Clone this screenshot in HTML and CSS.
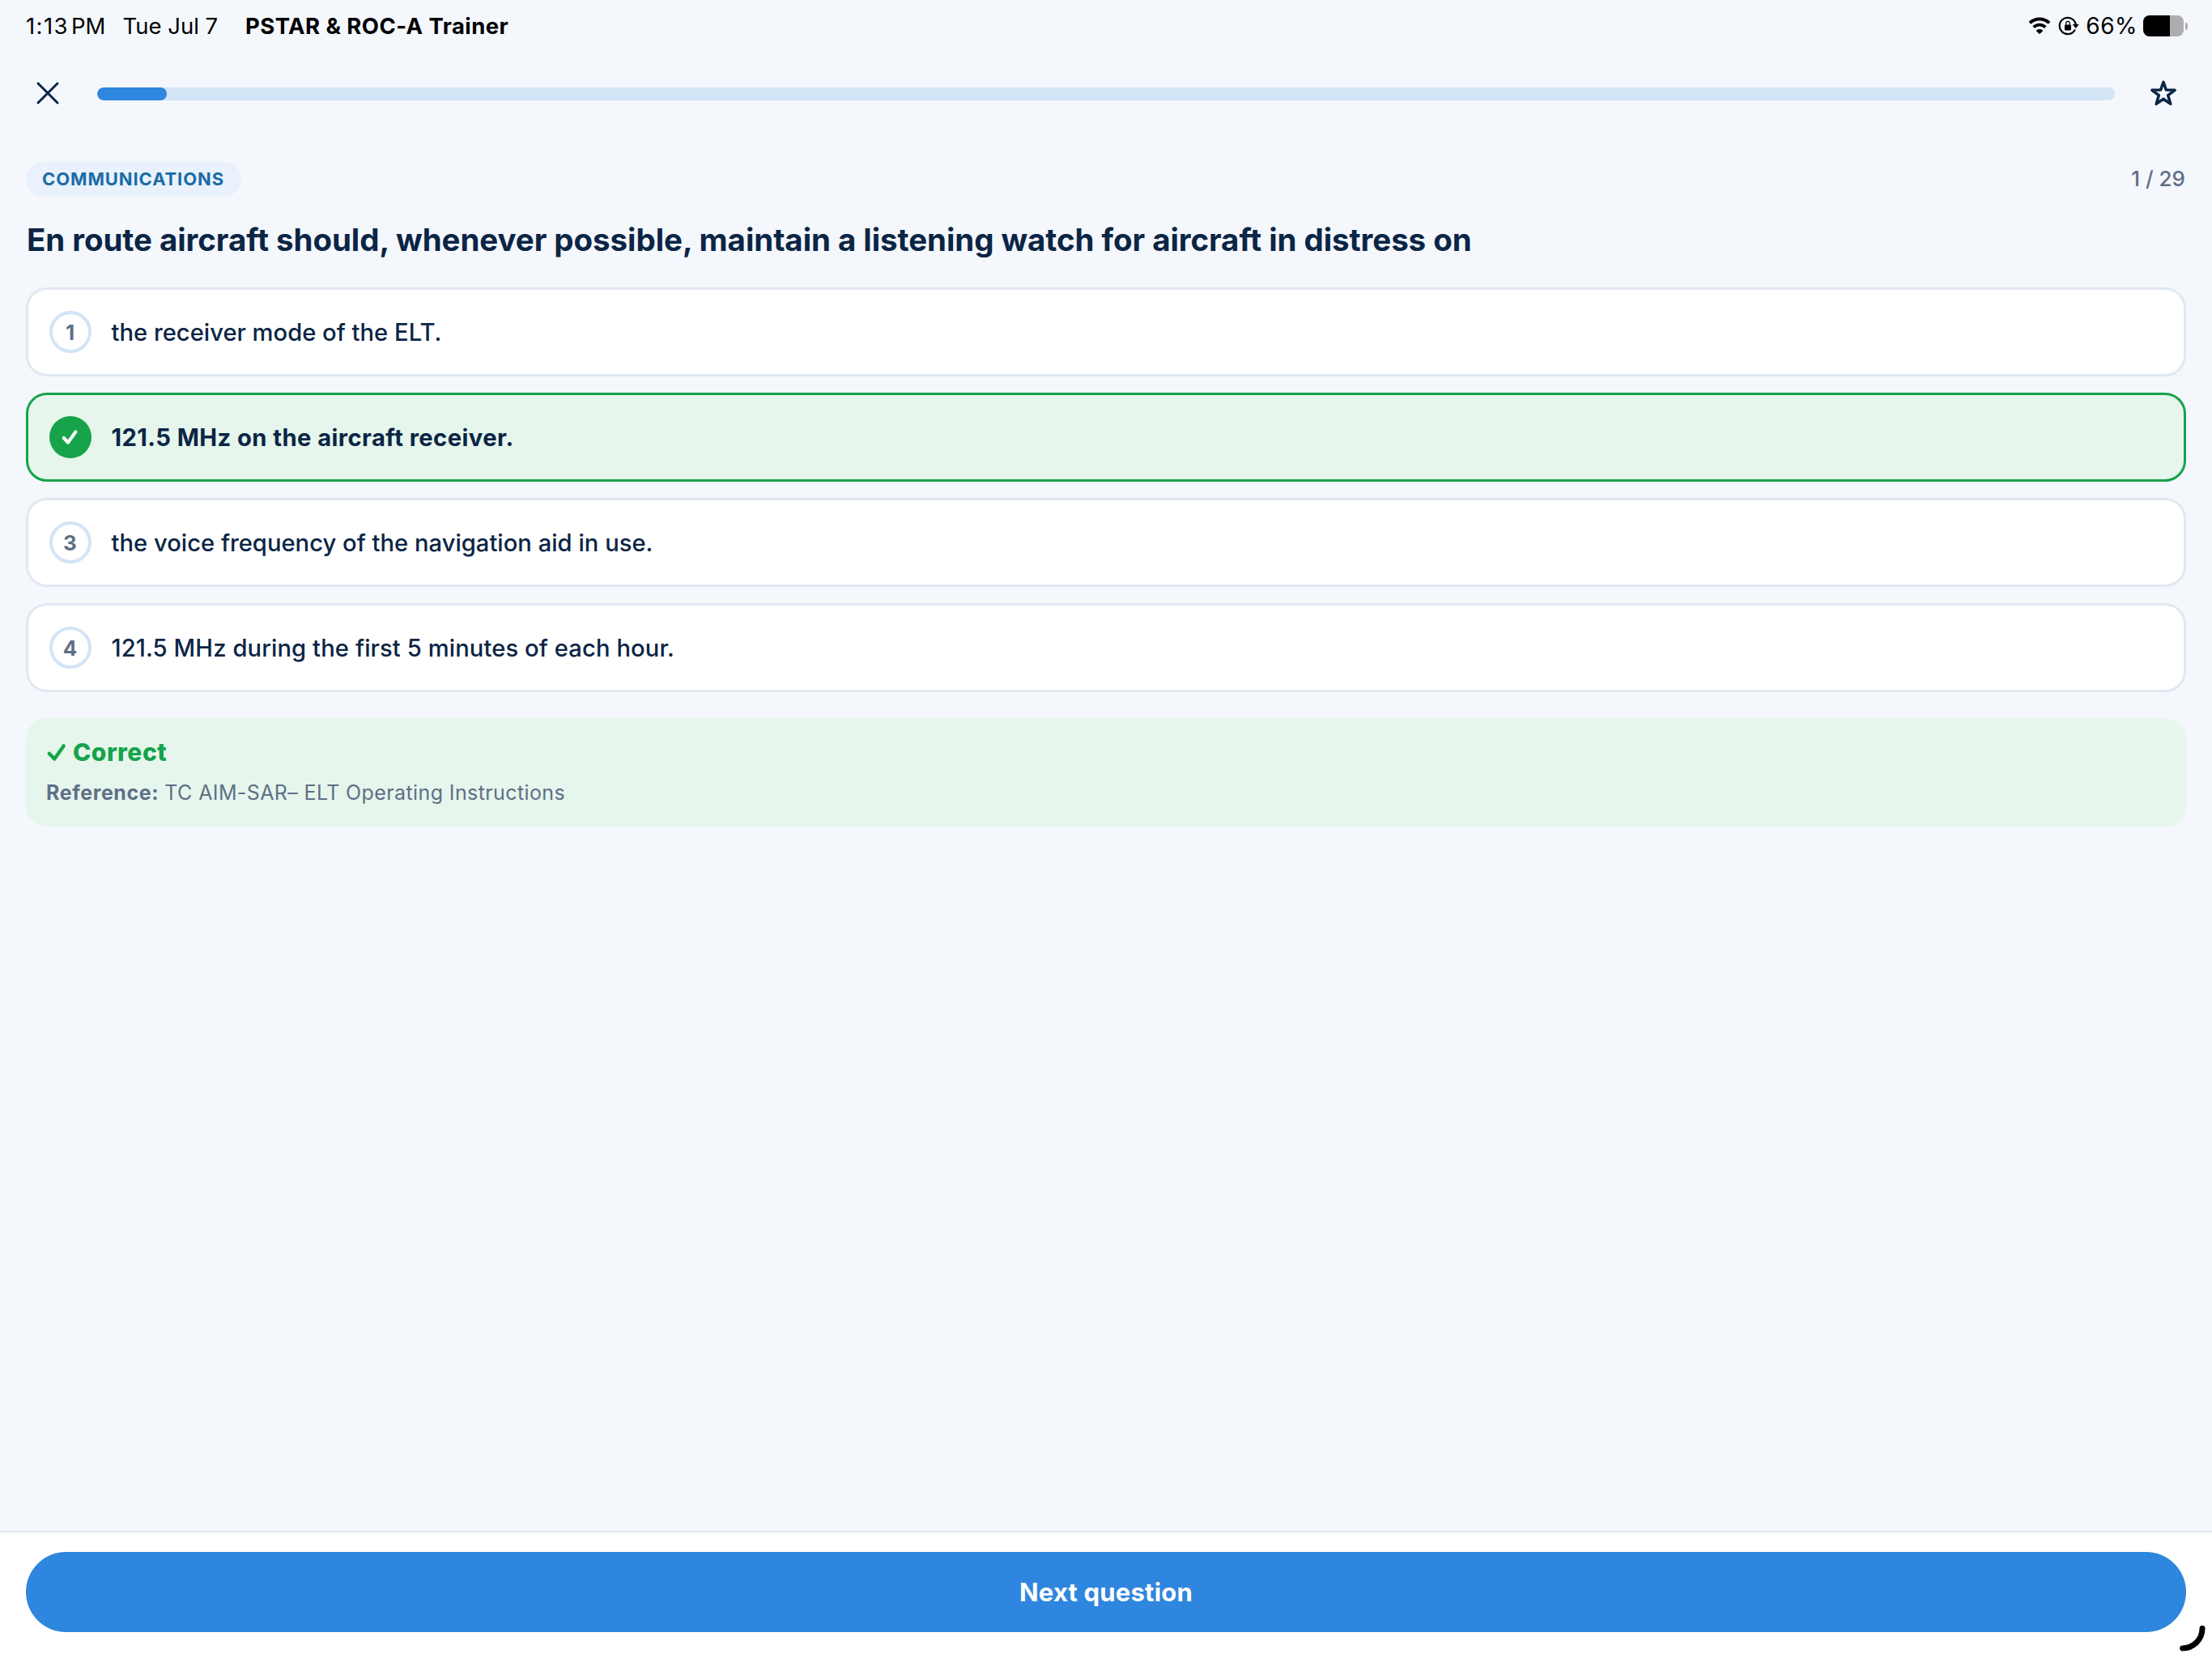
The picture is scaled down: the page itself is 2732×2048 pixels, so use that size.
FILE: index.html
```html
<!DOCTYPE html>
<html lang="en">
<head>
  <meta charset="UTF-8" />
  <title>PSTAR &amp; ROC-A Trainer</title>
  <meta name="viewport" content="width=device-width, initial-scale=1.0" />
  <link rel="stylesheet" href="styles.css">
</head>
<body>
  <div class="status-bar">
    <div class="status-time"><span class="clock">1:13</span><span>PM</span></div>
    <div class="status-date">Tue Jul 7</div>
    <div class="status-app">PSTAR &amp; ROC-A Trainer</div>
    <div class="status-right">
      <svg class="wifi" width="28" height="22" viewBox="0 0 28 22">
        <path d="M2 7.4 A17 17 0 0 1 26 7.4" fill="none" stroke="#000" stroke-width="4" stroke-linecap="butt" />
        <path d="M6.8 12.6 A10.2 10.2 0 0 1 21.2 12.6" fill="none" stroke="#000" stroke-width="3.8" />
        <path d="M14 20.8 L9.9 16.9 A6 6 0 0 1 18.1 16.9 Z" fill="#000" stroke="#000" stroke-width="0.6" stroke-linejoin="round" />
      </svg>
      <svg class="rotation-lock" width="26" height="24" viewBox="0 0 26 24">
        <path d="M20.4 17.3 A10.1 10.1 0 1 1 21.6 9.4" fill="none" stroke="#000" stroke-width="2.2" stroke-linecap="round" />
        <path d="M18.3 10.3 H25.2 L21.8 14.6 Z" fill="#000" stroke="#000" stroke-width="0.8" stroke-linejoin="round" />
        <rect x="8" y="10.6" width="8" height="6.8" rx="1" fill="#000" />
        <path d="M9.6 11 V9 A2.4 2.6 0 0 1 14.4 9 V11" fill="none" stroke="#000" stroke-width="1.2" />
      </svg>
      <span class="battery-text">66%</span>
      <div class="battery"><div class="battery-level"></div></div>
      <div class="battery-cap"></div>
    </div>
  </div>

  <div class="top-bar">
    <svg class="close" width="32" height="32" viewBox="0 0 32 32">
      <path d="M4 4 L28 28 M28 4 L4 28" fill="none" stroke="#0b2545" stroke-width="3" stroke-linecap="round" />
    </svg>
    <div class="progress">
      <div class="progress-fill" style="width: 3.45%"></div>
    </div>
    <svg class="star" width="36" height="36" viewBox="0 0 36 36">
      <path d="M18 4.3 L21.4 14.1 L32.1 14.3 L23.7 20.7 L26.8 31.4 L18 25.3 L9.2 31.4 L12.3 20.7 L3.9 14.3 L14.6 14.1 Z" fill="none" stroke="#0b2545" stroke-width="3.5" stroke-linejoin="round" />
    </svg>
  </div>

  <main class="content">
    <div class="meta">
      <span class="badge">COMMUNICATIONS</span>
      <span class="counter">1 / 29</span>
    </div>

    <h1>En route aircraft should, whenever possible, maintain a listening watch for aircraft in distress on</h1>

    <div class="options">
      <div class="option">
        <div class="number">1</div>
        <div class="option-text">the receiver mode of the ELT.</div>
      </div>
      <div class="option correct">
        <div class="number">
          <svg width="52" height="52" viewBox="0 0 52 52">
            <path d="M17.8 27 L23 32.6 L32.4 19.4" fill="none" stroke="#fff" stroke-width="4.2" stroke-linecap="round" stroke-linejoin="round" />
          </svg>
        </div>
        <div class="option-text">121.5 MHz on the aircraft receiver.</div>
      </div>
      <div class="option">
        <div class="number">3</div>
        <div class="option-text">the voice frequency of the navigation aid in use.</div>
      </div>
      <div class="option">
        <div class="number">4</div>
        <div class="option-text last">121.5 MHz during the first 5 minutes of each hour.</div>
      </div>
    </div>

    <div class="feedback">
      <div class="feedback-title">
        <svg width="26" height="26" viewBox="0 0 26 26">
          <path d="M4.8 14.8 L11.2 21.6 L22.6 5.4" fill="none" stroke="#16a34a" stroke-width="4.4" stroke-linecap="round" stroke-linejoin="round" />
        </svg>
        <span>Correct</span>
      </div>
      <div class="feedback-ref"><b>Reference:</b><span>TC AIM-SAR– ELT Operating Instructions</span></div>
    </div>
  </main>

  <footer class="footer">
    <button class="next-button">Next question</button>
  </footer>

  <svg class="corner" width="40" height="40" viewBox="0 0 40 40">
    <path d="M32 7.5 A24.5 24.5 0 0 1 7.7 32" fill="none" stroke="#000" stroke-width="7" stroke-linecap="round" />
  </svg>
</body>
</html>
```
FILE: styles.css
```css
:root {
  --bg: #f4f7fc;
  --navy: #0b2545;
  --muted: #5f6f87;
  --blue: #2e86de;
  --track: #d3e4f7;
  --line: #e2e8f2;
  --green: #16a34a;
  --green-bg: #e6f6ec;
}

* {
  box-sizing: border-box;
}

body {
  margin: 0;
  height: 100vh;
  display: flex;
  flex-direction: column;
  background: var(--bg);
  font-family: Inter, "Liberation Sans", sans-serif;
  color: var(--navy);
  overflow: hidden;
  position: relative;
}

.status-bar {
  height: 64px;
  padding: 0 30px 0 32px;
  display: flex;
  align-items: center;
  color: #000;
  font-size: 27.5px;
  white-space: nowrap;
}

.status-time {
  width: 119.5px;
}

.clock {
  letter-spacing: 1.4px;
  margin-right: 3px;
}

.status-date {
  width: 151.5px;
}

.status-app {
  font-weight: 700;
  letter-spacing: 0.43px;
}

.status-right {
  margin-left: auto;
  display: flex;
  align-items: center;
}

.wifi {
  margin-right: 9px;
}

.rotation-lock {
  margin-right: 8px;
}

.battery-text {
  font-size: 28px;
  letter-spacing: 0.5px;
  margin-right: 7px;
}

.battery {
  width: 50px;
  height: 26px;
  border-radius: 8px;
  background: #adadb1;
  overflow: hidden;
}

.battery-level {
  width: 66%;
  height: 100%;
  background: #000;
}

.battery-cap {
  width: 3px;
  height: 9px;
  margin-left: 2px;
  border-radius: 0 3px 3px 0;
  background: #adadb1;
}

.top-bar {
  height: 104px;
  padding: 0 42px 0 43px;
  display: flex;
  align-items: center;
}

.close {
  margin: 0 45px 2px 0;
}

.progress {
  flex: 1;
  height: 16px;
  border-radius: 8px;
  background: var(--track);
  overflow: hidden;
}

.progress-fill {
  height: 100%;
  border-radius: 8px;
  background: var(--blue);
}

.star {
  margin: 0 0 2px 42px;
}

.content {
  flex: 1;
  padding: 32px 32px 0;
}

.meta {
  display: flex;
  justify-content: space-between;
  align-items: flex-start;
}

.badge {
  height: 43px;
  padding: 0 21px 0 20px;
  border-radius: 22px;
  background: #e9f2fc;
  color: #1b6ca8;
  font-size: 22px;
  font-weight: 700;
  line-height: 43px;
  letter-spacing: 0.9px;
}

.counter {
  padding-right: 1px;
  color: var(--muted);
  font-size: 26px;
  font-weight: 500;
  line-height: 42px;
}

h1 {
  margin: 27px 0 33px 1px;
  font-size: 38.5px;
  font-weight: 700;
  line-height: 52px;
  letter-spacing: -0.07px;
}

.options {
  display: flex;
  flex-direction: column;
  gap: 20px;
}

.option {
  height: 110px;
  padding: 0 26px;
  display: flex;
  align-items: center;
  gap: 24px;
  border: 3px solid var(--line);
  border-radius: 26px;
  background: #fff;
}

.number {
  width: 52px;
  height: 52px;
  padding-right: 1px;
  display: flex;
  align-items: center;
  justify-content: center;
  border: 4px solid var(--track);
  border-radius: 50%;
  color: var(--muted);
  font-size: 26px;
  font-weight: 700;
}

.option-text {
  padding-left: 0.5px;
  font-size: 29.2px;
  font-weight: 500;
}

.option-text.last {
  letter-spacing: 0.09px;
}

.option.correct {
  border-color: var(--green);
  background: var(--green-bg);
}

.correct .number {
  padding: 0;
  border: none;
  background: var(--green);
}

.correct .option-text {
  font-weight: 700;
  letter-spacing: 0.42px;
}

.feedback {
  height: 134px;
  margin-top: 32px;
  padding: 24px;
  border-radius: 26px;
  background: var(--green-bg);
}

.feedback-title {
  display: flex;
  align-items: center;
  gap: 8px;
  height: 36px;
  color: var(--green);
  font-size: 30px;
  font-weight: 800;
  letter-spacing: 0.5px;
}

.feedback-ref {
  margin-top: 13px;
  padding-left: 1px;
  color: var(--muted);
  font-size: 25px;
  line-height: 39px;
  letter-spacing: 0.39px;
}

.feedback-ref b {
  margin-right: 7px;
  letter-spacing: 0.6px;
}

.footer {
  height: 157px;
  padding: 24px 32px 0;
  border-top: 2px solid var(--line);
  background: #fff;
}

.next-button {
  display: block;
  width: 100%;
  height: 99px;
  padding: 0;
  border: none;
  border-radius: 50px;
  background: var(--blue);
  color: #fff;
  font-family: inherit;
  font-size: 31px;
  font-weight: 700;
  letter-spacing: 0.2px;
  cursor: pointer;
}

/* drag handle over the lower right corner */
.corner {
  position: absolute;
  right: 4px;
  bottom: 4px;
}
```
